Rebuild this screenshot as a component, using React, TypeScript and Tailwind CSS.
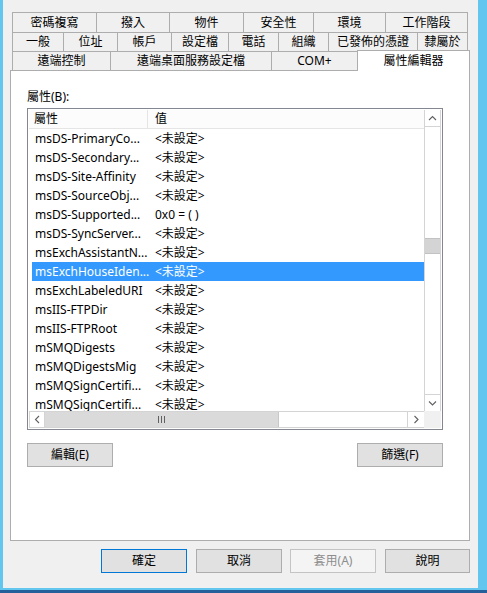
import React from "react";

const row1 = [
  { label: "密碼複寫", w: "w-[84px]" },
  { label: "撥入", w: "w-[73px]" },
  { label: "物件", w: "w-[74px]" },
  { label: "安全性", w: "w-[70px]" },
  { label: "環境", w: "w-[72px]" },
  { label: "工作階段", w: "w-[83px]" },
];
const row2 = [
  { label: "一般", w: "w-[51px]" },
  { label: "位址", w: "w-[54px]" },
  { label: "帳戶", w: "w-[54px]" },
  { label: "設定檔", w: "w-[57px]" },
  { label: "電話", w: "w-[50px]" },
  { label: "組織", w: "w-[50px]" },
  { label: "已發佈的憑證", w: "w-[89px]" },
  { label: "隸屬於", w: "w-[51px]" },
];
const row3 = [
  { label: "遠端控制", w: "w-[98px]" },
  { label: "遠端桌面服務設定檔", w: "w-[161px]" },
  { label: "COM+", w: "w-[86px]" },
];

const NS = "<未設定>";
const rows: [string, string][] = [
  ["msDS-PrimaryCo...", NS],
  ["msDS-Secondary...", NS],
  ["msDS-Site-Affinity", NS],
  ["msDS-SourceObj...", NS],
  ["msDS-Supported...", "0x0 = ( )"],
  ["msDS-SyncServer...", NS],
  ["msExchAssistantN...", NS],
  ["msExchHouseIden...", NS],
  ["msExchLabeledURI", NS],
  ["msIIS-FTPDir", NS],
  ["msIIS-FTPRoot", NS],
  ["mSMQDigests", NS],
  ["mSMQDigestsMig", NS],
  ["mSMQSignCertifi...", NS],
  ["mSMQSignCertifi...", NS],
];

function Tab({ label, w, last }: { label: string; w: string; last: boolean }) {
  return (
    <div
      className={`${w} h-full flex items-center justify-center whitespace-nowrap border-l border-t border-[#adadad] bg-[#f0f0f0] ${
        last ? "border-r" : ""
      }`}
    >
      {label}
    </div>
  );
}

function Chevron({ dir }: { dir: "up" | "down" | "left" | "right" }) {
  const d =
    dir === "up"
      ? "M1 5 L4.5 1.5 L8 5"
      : dir === "down"
      ? "M1 1.5 L4.5 5 L8 1.5"
      : dir === "left"
      ? "M5 1 L1.5 4.5 L5 8"
      : "M1.5 1 L5 4.5 L1.5 8";
  const vert = dir === "up" || dir === "down";
  return (
    <svg width={vert ? 9 : 7} height={vert ? 7 : 9} viewBox={vert ? "0 0 9 7" : "0 0 7 9"}>
      <path d={d} fill="none" stroke="#606060" strokeWidth="1.1" />
    </svg>
  );
}

export default function App() {
  return (
    <div className="w-[487px] h-[593px] flex flex-col overflow-hidden font-[family-name:'Noto_Sans','Noto_Sans_CJK_TC',sans-serif] text-[12px] text-black">
      <div className="flex h-[588px]">
        <div className="w-[3px] bg-[#62c6ee]" />
        <div className="w-[475px] bg-[#f0f0f0] flex flex-col pt-[12px]">
          {/* Tabs */}
          <div className="ml-[9px] w-[456px] flex flex-col">
            <div className="flex h-[20px]">
              {row1.map((t, i) => (
                <Tab key={i} label={t.label} w={t.w} last={i === row1.length - 1} />
              ))}
            </div>
            <div className="flex h-[19px]">
              {row2.map((t, i) => (
                <Tab key={i} label={t.label} w={t.w} last={i === row2.length - 1} />
              ))}
            </div>
            <div className="flex h-[19px] items-end">
              {row3.map((t, i) => (
                <Tab key={i} label={t.label} w={t.w} last={false} />
              ))}
              <div className="relative z-10 w-[113px] h-[21px] -mb-px -mr-[2px] flex items-center justify-center border-l border-t border-r border-[#adadad] bg-white">
                屬性編輯器
              </div>
            </div>
          </div>

          {/* Panel */}
          <div className="ml-[7px] w-[460px] h-[471px] border border-[#adadad] bg-white pl-[16px] pt-[18px]">
            <div className="h-[16px] leading-[16px]">屬性(B):</div>
            <div className="mt-[3px] w-[416px] h-[322px] border border-[#828790] p-px bg-white flex flex-col">
              <div className="flex h-[301px]">
                {/* content */}
                <div className="w-[395px] flex flex-col">
                  <div className="h-[19px] flex bg-[#fcfcfc] border-b border-[#e5e5e5] leading-[18px]">
                    <div className="w-[119px] pl-[5px] border-r border-[#e5e5e5]">屬性</div>
                    <div className="pl-[7px]">值</div>
                  </div>
                  <div className="h-[282px] overflow-hidden">
                    {rows.map(([n, v], i) => {
                      const sel = i === 7;
                      return (
                        <div
                          key={i}
                          className={`h-[19px] leading-[19px] flex ml-[3px] whitespace-nowrap ${
                            sel ? "bg-[#3399ff] text-white" : ""
                          }`}
                        >
                          <div className="w-[123px] pl-[3px] overflow-hidden">{n}</div>
                          <div>{v}</div>
                        </div>
                      );
                    })}
                  </div>
                </div>
                {/* vertical scrollbar */}
                <div className="w-[17px] h-[301px] flex flex-col bg-white border-l border-r border-[#d4d4d4]">
                  <div className="h-[17px] flex items-center justify-center border-b border-[#d4d4d4]">
                    <Chevron dir="up" />
                  </div>
                  <div className="h-[111px]" />
                  <div className="h-[16px] bg-[#d4d4d4] border-y border-[#c2c2c2]" />
                  <div className="flex-1" />
                  <div className="h-[17px] flex items-center justify-center border-t border-[#d4d4d4]">
                    <Chevron dir="down" />
                  </div>
                </div>
              </div>
              <div className="flex h-[17px]">
                {/* horizontal scrollbar */}
                <div className="w-[395px] h-[17px] flex bg-white border-t border-b border-[#d4d4d4]">
                  <div className="w-[16px] flex items-center justify-center border-l border-r border-[#d4d4d4]">
                    <Chevron dir="left" />
                  </div>
                  <div className="w-[234px] bg-[#dadada] border-r border-[#c8c8c8] flex items-center justify-center gap-[2px]">
                    <div className="w-px h-[7px] bg-[#606060]" />
                    <div className="w-px h-[7px] bg-[#606060]" />
                    <div className="w-px h-[7px] bg-[#606060]" />
                  </div>
                  <div className="flex-1" />
                  <div className="w-[17px] flex items-center justify-center border-l border-[#d4d4d4]">
                    <Chevron dir="right" />
                  </div>
                </div>
                <div className="w-[17px] h-[17px] bg-[#f0f0f0]" />
              </div>
            </div>
            <div className="mt-[13px] w-[416px] flex justify-between">
              <div className="w-[86px] h-[24px] flex items-center justify-center bg-[#e1e1e1] border border-[#adadad]">
                編輯(E)
              </div>
              <div className="w-[86px] h-[24px] flex items-center justify-center bg-[#e1e1e1] border border-[#adadad]">
                篩選(F)
              </div>
            </div>
          </div>

          {/* Bottom buttons */}
          <div className="mt-[8px] flex h-[24px]">
            <div className="ml-[98px] w-[86px] h-[24px] flex items-center justify-center bg-[#e1e1e1] border border-[#0078d7]">
              確定
            </div>
            <div className="ml-[9px] w-[86px] h-[24px] flex items-center justify-center bg-[#e1e1e1] border border-[#adadad]">
              取消
            </div>
            <div className="ml-[8px] w-[86px] h-[24px] flex items-center justify-center bg-[#f4f4f4] border border-[#c4c4c4] text-[#8d8d8d]">
              套用(A)
            </div>
            <div className="ml-[9px] w-[85px] h-[24px] flex items-center justify-center bg-[#e1e1e1] border border-[#adadad]">
              說明
            </div>
          </div>
        </div>
        <div className="w-[9px] bg-[#62c6ee]" />
      </div>
      <div className="h-[2px] bg-[#62c6ee]" />
      <div className="h-[3px] bg-[#25609a]" />
    </div>
  );
}
